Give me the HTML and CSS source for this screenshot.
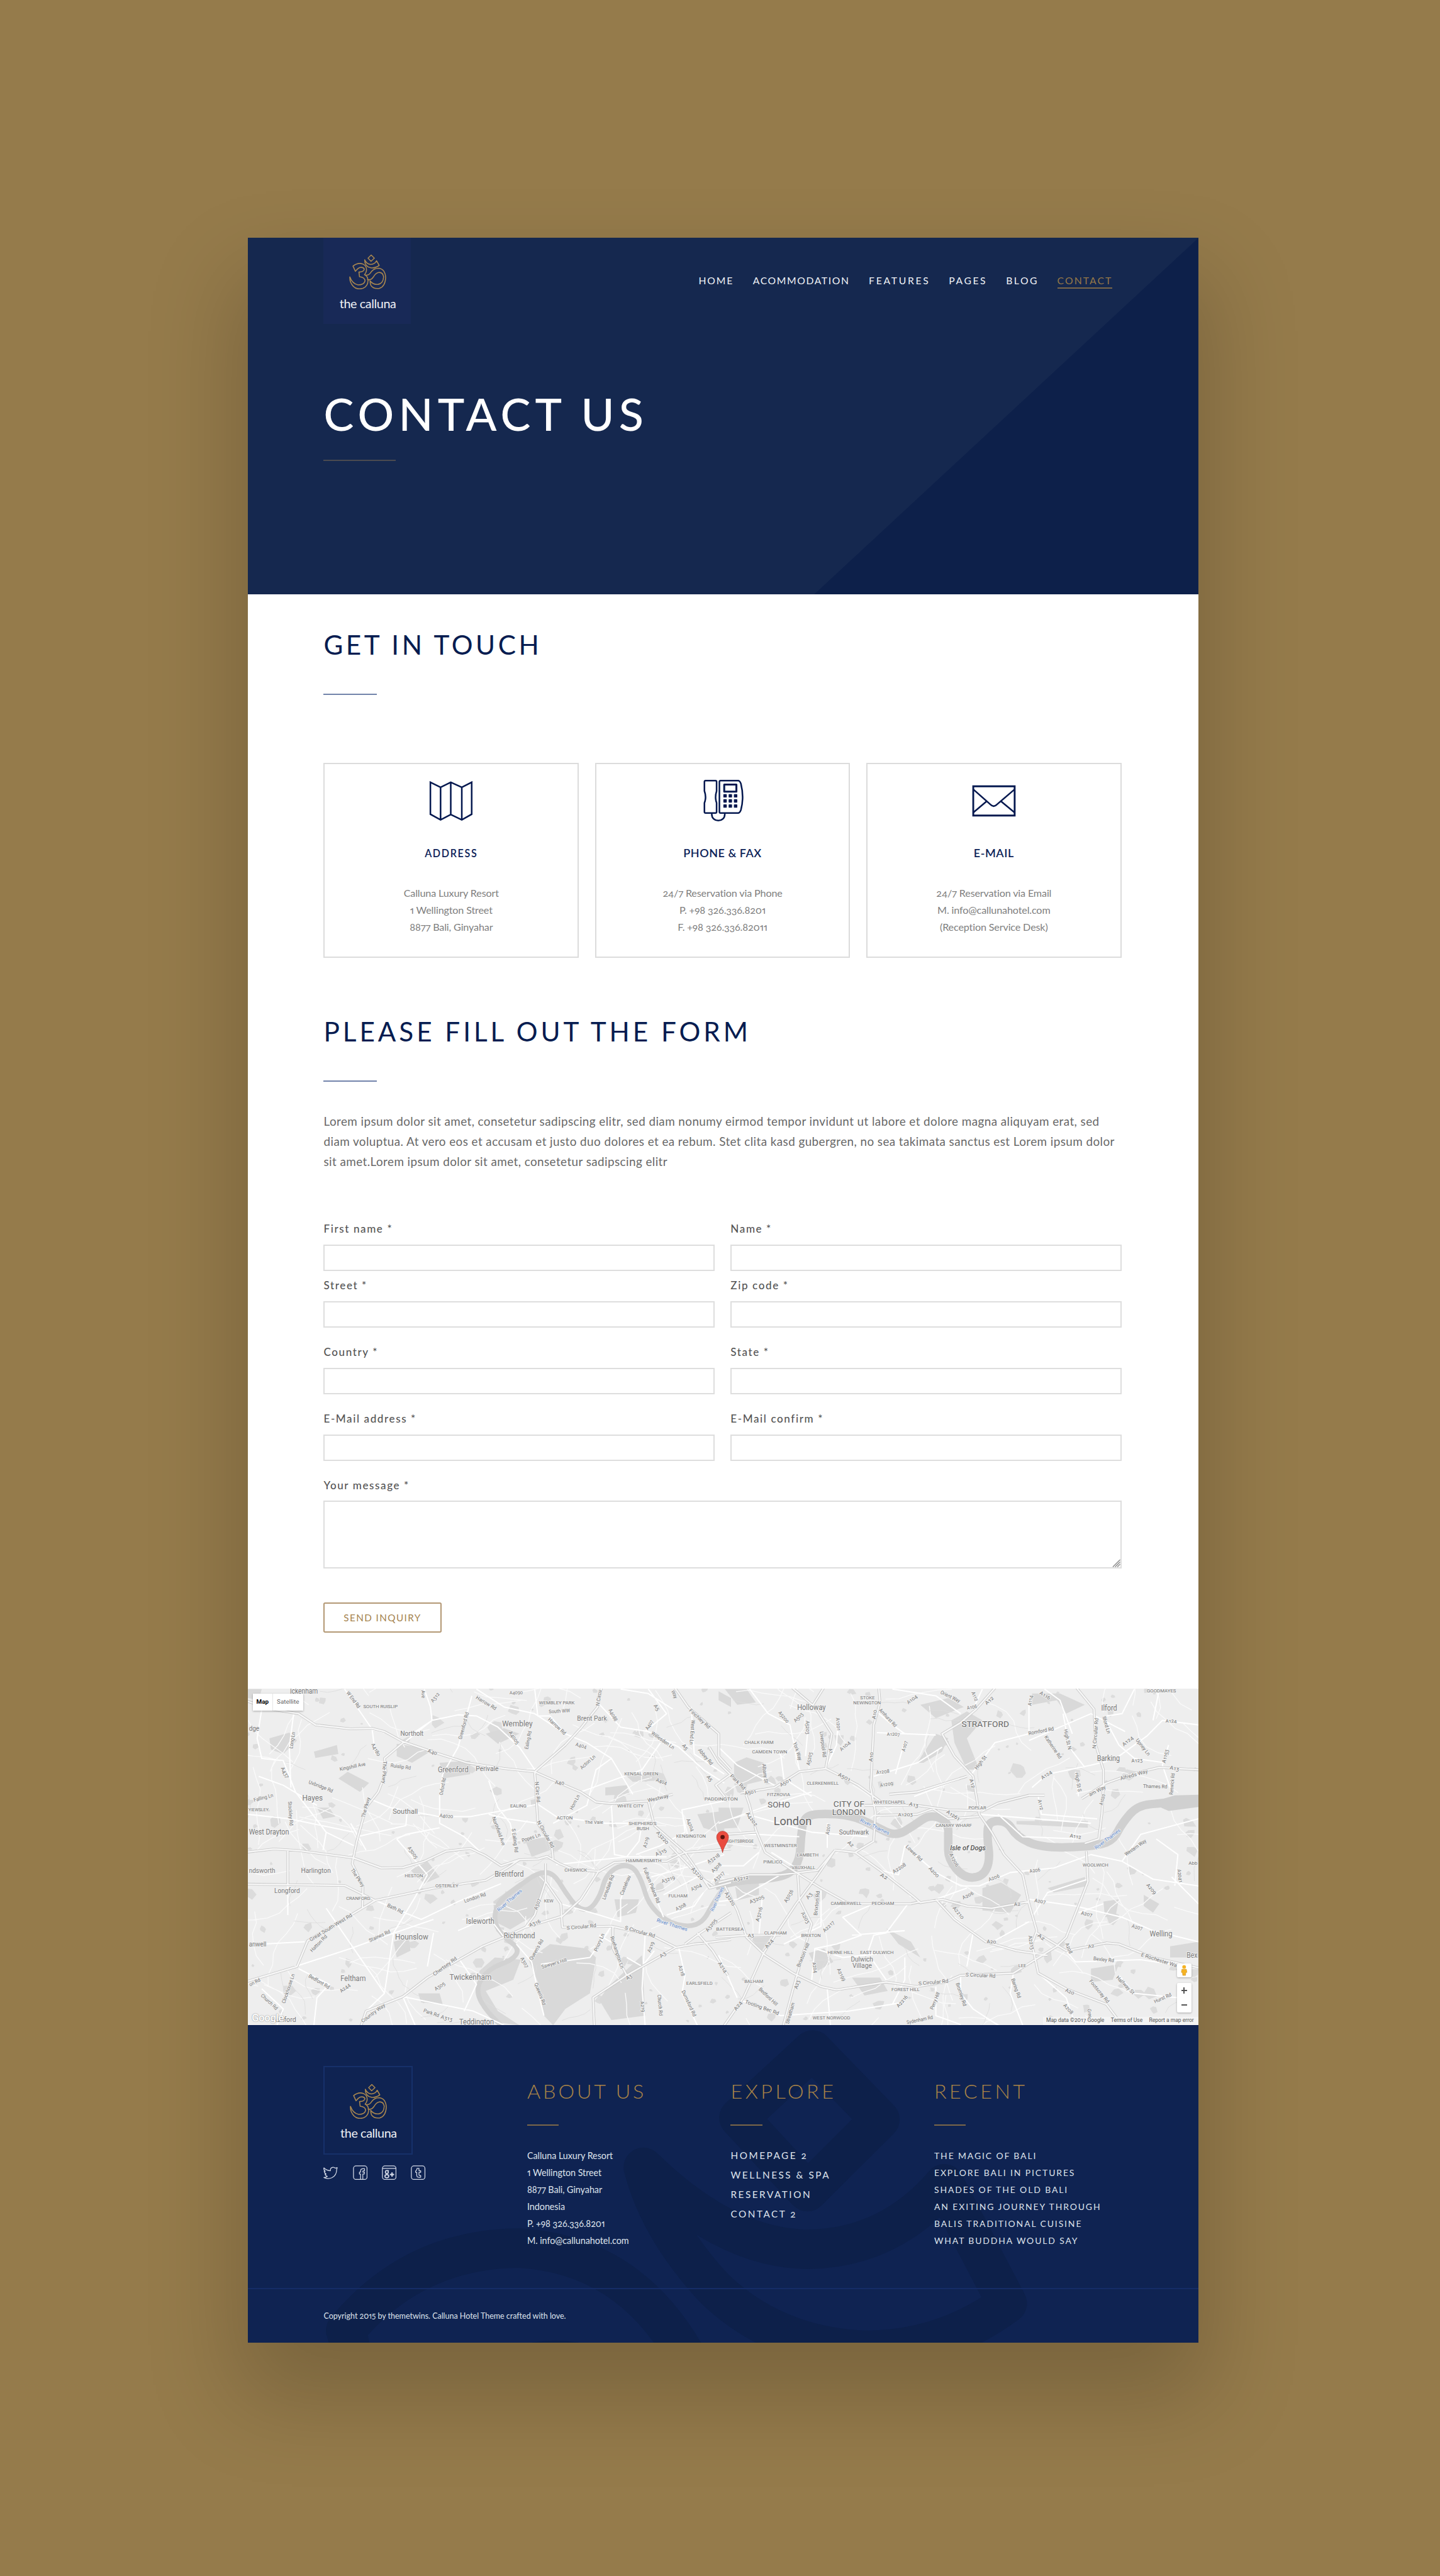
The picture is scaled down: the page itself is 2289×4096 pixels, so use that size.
FILE: index.html
```html
<!DOCTYPE html>
<html lang="en">
<head>
<meta charset="utf-8">
<title>Contact us – the calluna</title>
<link rel="stylesheet" href="styles.css">
</head>
<body>
<svg class="defs" aria-hidden="true">
  <symbol id="om" viewBox="157 96 205 192">
    <g fill="none" stroke="currentColor" stroke-width="5.4" stroke-linejoin="round" stroke-linecap="round">
      <path d="M278 101 L295 118 L277 135 L261 118 Z"/>
      <path d="M243 127 Q252 149 275 152 Q297 151 307 132 L321 157 Q300 173 276 170 Q242 163 243 127 Z"/>
      <path d="M180 161 Q205 140 232 149 Q257 160 252 188 Q250 198 242 207 Q259 214 261 238 Q260 270 233 281 Q202 290 182 270 Q161 248 163 219 Q177 257 207 262 Q240 262 245 240 Q243 221 215 218 L212 193 Q238 193 241 177 Q234 164 215 169 Q202 175 193 189 Z"/>
      <path d="M246 209 Q264 214 278 192 Q292 172 318 172 Q353 176 356 222 Q354 270 322 281 Q288 285 276 264 Q272 252 272 240 Q288 262 315 259 Q343 255 345 218 Q340 193 318 195 Q302 198 290 219 Q277 239 258 233"/>
    </g>
  </symbol>
</svg>
<div class="page">
  <header class="hero">
    <div class="topbar">
      <a class="logo"><svg class="om"><use href="#om"/></svg><span>the calluna</span></a>
      <nav class="nav">
        <a>HOME</a><a>ACOMMODATION</a><a>FEATURES</a><a>PAGES</a><a>BLOG</a><a class="active">CONTACT</a>
      </nav>
    </div>
    <h1>CONTACT US</h1>
    <div class="rule rule-hero"></div>
  </header>

  <main class="content">
    <h2 class="touch">GET IN TOUCH</h2>
    <div class="rule"></div>
    <div class="cards">
      <section class="card">
        <svg viewBox="0 0 80 80" fill="none" stroke="currentColor" stroke-width="2.8" stroke-linejoin="miter">
          <path d="M3.500 6.500 L21.500 15.500 L39.500 6.500 L59 15.500 L76.500 6.500 V63 L59 73 L39.500 63.500 L21.500 73 L3.500 63 Z M21.500 15.500 V73 M39.500 6.500 V63.500 M59 15.500 V73"/>
        </svg>
        <h4 class="wide">ADDRESS</h4>
        <p>Calluna Luxury Resort</p><p class="num">1 Wellington Street</p><p class="num">8877 Bali, Ginyahar</p>
      </section>
      <section class="card">
        <svg viewBox="0 0 80 80" fill="none" stroke="currentColor" stroke-width="2.8" stroke-linejoin="round">
          <path d="M9.500 3.500 H27 Q29 3.500 29 5.500 V22 Q25.500 33 29 43 V59 Q29 61 27 61 H9.500 Q7.500 61 7.500 59 V43 Q11.500 33 7.500 22 V5.500 Q7.500 3.500 9.500 3.500 Z"/>
          <path d="M36 3.500 H67 Q70 3.500 72 9 Q78 33 72 55.500 Q70 61 67 61 H36 Q34 61 34 59 V5.500 Q34 3.500 36 3.500 Z"/>
          <path stroke-width="3.400" d="M42.500 10.500 H64 V23 H42.500 Z"/>
          <path d="M20.500 61 V63 C20.500 78 43.500 78 43.500 63 V61"/>
          <g fill="currentColor" stroke="none">
            <rect x="41" y="27.500" width="6" height="6" rx="1"/><rect x="50.300" y="27.500" width="6" height="6" rx="1"/><rect x="59.600" y="27.500" width="6" height="6" rx="1"/>
            <rect x="41" y="36.500" width="6" height="6" rx="1"/><rect x="50.300" y="36.500" width="6" height="6" rx="1"/><rect x="59.600" y="36.500" width="6" height="6" rx="1"/>
            <rect x="41" y="45.500" width="6" height="6" rx="1"/><rect x="50.300" y="45.500" width="6" height="6" rx="1"/><rect x="59.600" y="45.500" width="6" height="6" rx="1"/>
          </g>
        </svg>
        <h4>PHONE &amp; FAX</h4>
        <p>24/7 Reservation via Phone</p><p class="tel">P. +98 326.336.8201</p><p class="tel">F. +98 326.336.82011</p>
      </section>
      <section class="card">
        <svg viewBox="0 0 80 80" fill="none" stroke="currentColor" stroke-width="2.800">
          <path d="M3.400 13.600 H76.600 V65.400 H3.400 Z" stroke-width="3.200"/>
          <path d="M3.500 19 L34 46 Q39.500 51.500 45 46 L76.500 19 M3.500 60 L26.500 40.500 M76.500 60 L53 40.500"/>
        </svg>
        <h4>E-MAIL</h4>
        <p>24/7 Reservation via Email</p><p>M. info@callunahotel.com</p><p>(Reception Service Desk)</p>
      </section>
    </div>

    <h2 class="fill">PLEASE FILL OUT THE FORM</h2>
    <div class="rule"></div>
    <p class="intro">Lorem ipsum dolor sit amet, consetetur sadipscing elitr, sed diam nonumy eirmod tempor invidunt ut labore et dolore magna aliquyam erat, sed<br>diam voluptua. At vero eos et accusam et justo duo dolores et ea rebum. Stet clita kasd gubergren, no sea takimata sanctus est Lorem ipsum dolor<br>sit amet.Lorem ipsum dolor sit amet, consetetur sadipscing elitr</p>

    <form class="form">
      <div class="row tight">
        <label>First name *<input type="text"></label><label>Name *<input type="text"></label>
      </div>
      <div class="row">
        <label>Street *<input type="text"></label><label>Zip code *<input type="text"></label>
      </div>
      <div class="row">
        <label>Country *<input type="text"></label><label>State *<input type="text"></label>
      </div>
      <div class="row">
        <label>E-Mail address *<input type="text"></label><label>E-Mail confirm *<input type="text"></label>
      </div>
      <label>Your message *
        <span class="area"><svg class="grip" viewBox="0 0 14 14"><path d="M1 14 L14 1 M5 14 L14 5 M9 14 L14 9" stroke="#8b8b8b" stroke-width="1.500"/></svg></span>
      </label>
      <button type="button">SEND INQUIRY</button>
    </form>
  </main>

  <section class="map">
    <svg id="map" viewBox="0 0 1680 595"></svg>
    <div class="maptype"><b>Map</b><span>Satellite</span></div>
    <div class="pegman"><svg viewBox="0 0 14 20"><circle cx="7" cy="4" r="3.300" fill="#f5b324"/><path d="M3 8 H11 L12 13.500 L10 14 L9.500 19 H4.500 L4 14 L2 13.500 Z" fill="#f5b324" stroke="#c98a1a" stroke-width=".6"/></svg></div>
    <div class="zoom"><i class="plus"></i><i class="minus"></i></div>
    <div class="credit"><span>Map data ©2017 Google</span><span>Terms of Use</span><span>Report a map error</span></div>
    <div class="google">Google</div>
  </section>

  <footer class="footer">
    <svg class="watermark" viewBox="438 3580 1680 561.500" preserveAspectRatio="none" fill="none" stroke="#0d204a" stroke-width="70" stroke-linejoin="round" stroke-linecap="round">
      <path d="M1436 3623 L1555 3746 L1427 3874 L1306 3743 Z"/>
      <path d="M1137 3831 Q1285 3976 1429 3976 Q1572 3974 1669 3860 L1780 4072 Q1670 4154 1533 4155 Q1370 4150 1262 4045 Q1165 3940 1137 3831 Z"/>
      <path d="M625 4190 Q620 4145 611 4120 Q730 3975 918 3974 Q1110 3985 1212 4165"/>
      <path d="M880 4200 Q983 4145 1080 4200"/>
    </svg>
    <div class="footmain">
      <div>
        <a class="logo boxed"><svg class="om"><use href="#om"/></svg><span>the calluna</span></a>
        <div class="social">
          <svg viewBox="0 0 26 26"><path d="M1 4.500 Q6 9.500 12.500 9.500 Q12 4 17 3.500 Q19.500 3.300 21 5 L24.500 4 L23.500 7.500 Q23.500 18 15 22 Q7.500 25 1 21.500 Q5 21.500 7 19.500 Q3.500 18.500 3 15.500 L5 15.500 Q1.500 13.500 1.500 10 L3.500 10.500 Q0 8 1 4.500 Z"/></svg>
          <svg viewBox="0 0 26 26"><rect x="1" y="1" width="24" height="24" rx="4.500"/><path d="M13.500 25 V15.500 H11.500 V12 H13.500 V10 Q13.500 6 18 6 H20.500 V9.500 H18.500 Q17.500 9.500 17.500 11 V12 H20.500 L20 15.500 H17.500 V25"/></svg>
          <svg viewBox="0 0 26 26"><rect x="1" y="1" width="24" height="24" rx="4.500"/><path d="M1 5.500 H25"/><circle cx="8.800" cy="12" r="2.600" stroke-width="1.900"/><ellipse cx="8.800" cy="19.300" rx="3.400" ry="2.700" stroke-width="1.900"/><path stroke-width="2.400" d="M18 12.500 V20 M14.300 16.200 H21.700"/><path d="M9 9.300 H12.500"/></svg>
          <svg viewBox="0 0 26 26"><rect x="1" y="1" width="24" height="24" rx="4.500"/><path d="M11 5.500 H14.500 V9.500 H17.500 V12.500 H14.500 V17 Q14.500 18.500 17.500 18 V21 Q10.500 22.500 10.500 17.500 V12.500 H8.500 V10 Q10.800 9 11 5.500 Z"/></svg>
        </div>
      </div>
      <div>
        <h3>ABOUT US</h3><div class="rule"></div>
        <ul class="about"><li>Calluna Luxury Resort</li><li class="num">1 Wellington Street</li><li class="num">8877 Bali, Ginyahar</li><li>Indonesia</li><li class="tel">P. +98 326.336.8201</li><li>M. info@callunahotel.com</li></ul>
      </div>
      <div>
        <h3>EXPLORE</h3><div class="rule"></div>
        <ul class="explore"><li>HOMEPAGE 2</li><li>WELLNESS &amp; SPA</li><li>RESERVATION</li><li>CONTACT 2</li></ul>
      </div>
      <div>
        <h3>RECENT</h3><div class="rule"></div>
        <ul class="recent"><li>THE MAGIC OF BALI</li><li>EXPLORE BALI IN PICTURES</li><li>SHADES OF THE OLD BALI</li><li>AN EXITING JOURNEY THROUGH</li><li>BALIS TRADITIONAL CUISINE</li><li>WHAT BUDDHA WOULD SAY</li></ul>
      </div>
    </div>
    <div class="copyright">Copyright 2015 by themetwins. Calluna Hotel Theme crafted with love.</div>
  </footer>
</div>
<script src="map.js"></script>
</body>
</html>
```
FILE: styles.css
```css
/* 1rem is ten design pixels of the 2545px wide layout */
html { font-size: 8.9941px; }
* { box-sizing: border-box; margin: 0; padding: 0; }
body {
  background: #957b4b;
  font-family: Lato, "Open Sans", sans-serif;
  font-variant-numeric: oldstyle-nums proportional-nums;
  height: 4096px;
  overflow: hidden;
  padding: 42rem 0 0 43.8rem;
}
ul { list-style: none; }
.defs { position: absolute; width: 0; height: 0; }

.page {
  width: 168rem;
  height: 372.15rem;
  background: #fff;
  box-shadow: 0 8.5rem 15rem 2rem rgba(0, 0, 0, .18);
}

/* Hero */
.hero {
  height: 63.1rem;
  padding-left: 13.4rem;
  color: #fff;
  background:
    linear-gradient(to bottom right, #15284f 50%, #0d204a 50.1%) right top / 68rem 63.1rem no-repeat,
    #15284f;
}
.topbar { display: flex; justify-content: space-between; height: 15.3rem; }
.logo {
  width: 15.4rem;
  height: 15.3rem;
  display: flex;
  flex-direction: column;
  align-items: center;
  padding: 2.9rem 0 0 .2rem;
  background: #182957;
  color: #fff;
}
.logo .om { width: 6.8rem; height: 6.3rem; color: #a8864f; }
.logo span { margin-top: 1.35rem; font-size: 2.2rem; line-height: 2.2rem; letter-spacing: -.02em; color: #eef0f5; }
.nav {
  display: grid;
  grid-template-columns: 9.6rem 20.5rem 14.15rem 10.1rem 9.05rem 9.75rem;
  padding: 6.6rem 1.6rem 0 0;
  margin-right: 13.6rem;
  font-size: 1.75rem;
  line-height: 2rem;
  letter-spacing: .12em;
  color: #f0f2f6;
}
.nav a:nth-child(2) { letter-spacing: .103em; }
.nav a:nth-child(3) { letter-spacing: .172em; }
.nav a:nth-child(4), .nav a:nth-child(5) { letter-spacing: .16em; }
.nav a:nth-child(6) { letter-spacing: .134em; }
.nav a { align-self: start; }
.nav .active { color: #957848; border-bottom: 2px solid #7b6749; padding-bottom: .2rem; }
h1 { margin-top: 11.85rem; font-size: 8rem; line-height: 8rem; font-weight: 500; letter-spacing: .1em; }
.rule { width: 9.4rem; height: 2px; background: #7183aa; }
.rule-hero { width: 12.7rem; margin-top: 4.1rem; background: #4b4b50; }

/* Content */
.content { height: 193.4rem; padding: 6.5rem 13.6rem 0 13.4rem; }
h2 { font-size: 4.7rem; line-height: 4.7rem; font-weight: 400; color: #061c50; margin-bottom: 6.3rem; }
.touch { letter-spacing: .107em; }
.fill { letter-spacing: .117em; margin-top: 10.7rem; }
.cards { display: grid; grid-template-columns: repeat(3, 1fr); gap: 2.85rem; margin-top: 12rem; }
.card {
  height: 34.53rem;
  border: 2px solid #dcdcdc;
  padding-top: 2.6rem;
  text-align: center;
  font-size: 1.8rem;
  line-height: 3rem;
  color: #808080;
}
.card svg { display: block; width: 8rem; height: 8rem; margin: 0 auto; color: #04184f; }
.card h4 {
  margin: 4rem 0 4.4rem;
  font-size: 2rem;
  line-height: 2.4rem;
  font-weight: 600;
  letter-spacing: .03em;
  color: #0c2258;
}
.card .wide { font-size: 1.8rem; letter-spacing: .1em; }
.card p { letter-spacing: -.01em; }
.intro {
  margin-top: 5.15rem;
  font-size: 2.1rem;
  line-height: 3.6rem;
  letter-spacing: .0222em;
  color: #686868;
  white-space: nowrap;
}
.form { margin-top: 8.84rem; }
.row { display: grid; grid-template-columns: 1fr 1fr; gap: 2.85rem; margin-bottom: 3.1rem; }
.tight { margin-bottom: 1.35rem; }
label { display: block; font-size: 1.9rem; line-height: 2.4rem; font-weight: 500; letter-spacing: .093em; color: #555; }
input, .area { display: block; width: 100%; height: 4.7rem; margin-top: 1.57rem; border: 2px solid #dedede; background: #fff; }
.area { position: relative; height: 11.9rem; }
.grip { position: absolute; right: 0; bottom: 0; width: 1.4rem; height: 1.4rem; }
button {
  display: block;
  width: 20.8rem;
  height: 5.36rem;
  margin-top: 6.05rem;
  border: 2px solid #b39874;
  border-radius: .3rem;
  background: #fff;
  font: 400 1.7rem/2rem Lato, sans-serif;
  letter-spacing: .092em;
  color: #a5834e;
}

/* Map */
.map { position: relative; height: 59.5rem; overflow: hidden; background: #eee; font-family: Roboto, sans-serif; }
.map > svg { display: block; width: 100%; height: 100%; }
.maptype, .pegman, .zoom, .credit, .google { position: absolute; }
.maptype {
  left: .9rem; top: .95rem; width: 8.9rem; height: 2.95rem;
  display: flex; background: #fff; box-shadow: 0 1px 3px rgba(0, 0, 0, .3);
  font-size: 1.1rem; line-height: 3rem; color: #666;
}
.maptype b { width: 3.5rem; text-align: center; color: #000; border-right: 1px solid #e6e6e6; font-weight: 700; }
.maptype span { flex: 1; text-align: center; }
.pegman, .zoom { right: 1.2rem; width: 2.6rem; background: #fff; box-shadow: 0 1px 3px rgba(0, 0, 0, .3); border-radius: 2px; }
.pegman { top: 48.6rem; height: 2.5rem; }
.pegman svg { display: block; height: 2rem; margin: .25rem auto; }
.zoom { top: 52.1rem; height: 5.2rem; display: flex; flex-direction: column; justify-content: space-around; align-items: center; }
.zoom i { width: 1.1rem; height: 1.1rem; background: linear-gradient(#555, #555) center / 100% .25rem no-repeat; }
.zoom .plus { background: linear-gradient(#555, #555) center / 100% .25rem no-repeat, linear-gradient(#555, #555) center / .25rem 100% no-repeat; }
.credit {
  right: 0; bottom: 0; height: 1.4rem; padding: 0 .8rem 0 .6rem; display: flex; gap: 1.15rem;
  background: rgba(245, 245, 245, .8); font-size: .95rem; line-height: 1.2rem; color: #555; white-space: nowrap;
}
.google {
  left: .7rem; bottom: .2rem; font-size: 1.85rem; line-height: 2rem; font-weight: 500; color: #fff;
  text-shadow: 0 0 2px #999, 0 0 1px #999; letter-spacing: -.02em;
}

/* Footer */
.footer { position: relative; height: 56.15rem; background: #0f2352; border-top: 1px solid #06164a; overflow: hidden; color: #dfe3ec; }
.watermark { position: absolute; inset: 0; width: 100%; height: 100%; }
.footmain {
  position: relative;
  display: grid;
  grid-template-columns: repeat(4, 35.97rem);
  height: 46.6rem;
  padding: 7.1rem 0 0 13.4rem;
  border-bottom: 2px solid #152c66;
}
.boxed { width: 15.7rem; height: 15.7rem; border: 2px solid #16306a; background: none; }
.footmain .social { display: flex; gap: 2.55rem; margin-top: 1.85rem; }
.social svg { width: 2.6rem; height: 2.6rem; fill: none; stroke: #d3d9e6; stroke-width: 1.4; stroke-linejoin: round; }
h3 { margin-top: 2.65rem; font-size: 3.6rem; line-height: 3.6rem; font-weight: 300; letter-spacing: .138em; color: #a98347; }
div:nth-child(2) > h3 { letter-spacing: .12em; }
.footmain .rule { width: 5.6rem; margin-top: 4.1rem; background: #7b6749; }
.about { margin-top: 3.8rem; font-size: 1.6rem; line-height: 3.01rem; letter-spacing: -.004em; }
.explore { margin-top: 3.63rem; font-size: 1.7rem; line-height: 3.43rem; letter-spacing: .166em; }
.recent { margin-top: 3.8rem; font-size: 1.55rem; line-height: 3.01rem; letter-spacing: .135em; }
.copyright { position: relative; padding: 3.8rem 0 0 13.4rem; font-size: 1.4rem; line-height: 2rem; letter-spacing: -.004em; }
```
FILE: map.js
```js
const NS = 'http://www.w3.org/2000/svg';
const svg = document.getElementById('map');
const west = (x, y) => [x / 1.8447 - 8, y / 2.529 - 15];
const east = (x, y) => [832 + x / 1.8233, y / 2.529 - 15];

function el(name, attrs, text) {
  const n = document.createElementNS(NS, name);
  for (const k in attrs) n.setAttribute(k, attrs[k]);
  if (text) n.textContent = text;
  svg.appendChild(n);
  return n;
}
const pts = (s, p) => s.trim().split(/\s+/).map(v => p(...v.split(',').map(Number)));
function poly(a, close) { return 'M' + a.map(p => p[0].toFixed(1) + ' ' + p[1].toFixed(1)).join('L') + (close ? 'Z' : ''); }
function smooth(a) {
  let d = 'M' + a[0].join(' ');
  for (let i = 1; i < a.length - 1; i++) {
    const m = [(a[i][0] + a[i + 1][0]) / 2, (a[i][1] + a[i + 1][1]) / 2];
    d += 'Q' + a[i].join(' ') + ' ' + (i === a.length - 2 ? a[i + 1] : m).join(' ');
  }
  return a.length < 3 ? poly(a) : d;
}
let seed = 71;
const rnd = () => (seed = (seed * 16807) % 2147483647) / 2147483647;

// small green spaces
let d = '';
for (let i = 0; i < 330; i++) {
  const x = rnd() * 1680, y = rnd() * 595, r = 3 + rnd() * rnd() * 15, n = 5 + Math.floor(rnd() * 3), q = [];
  for (let k = 0; k < n; k++) { const t = k / n * 6.283 + rnd() * .6, e = r * (.5 + rnd() * .6); q.push([x + Math.cos(t) * e, y + Math.sin(t) * e * .9]); }
  d += poly(q, true);
}
el('path', { d, fill: '#dcdcdc' });

const parksW = ['815,990 900,905 975,860 985,900 950,1050 870,1115 820,1080', '930,1250 1000,1180 1120,1200 1150,1240 1130,1400 1050,1470 1010,1543 980,1500 960,1350',
  '1190,1370 1300,1230 1310,1500 1200,1520 1160,1430', '770,1300 820,1240 905,1250 880,1340 790,1390 830,1480 900,1543 830,1530 760,1400', '85,260 150,235 175,270 130,330 90,310',
  '230,320 305,290 310,330 235,348', '310,440 340,410 410,460 380,500', '500,285 620,310 550,370 500,340', '790,240 850,215 900,240 830,285', '490,1170 540,1150 545,1210 500,1240',
  '1480,600 1568,585 1568,690 1500,660', '920,720 990,700 1000,760 940,790', '1180,480 1250,470 1260,510 1180,515', '545,850 600,810 640,880 590,910', '640,370 740,360 740,420 650,440',
  '1210,980 1290,980 1280,1040 1220,1060', '570,1400 640,1400 650,1450 580,1440', '15,40 60,40 50,90 15,80', '240,570 280,570 300,610 260,620', '1250,430 1340,420 1340,450 1270,455'];
const parksE = ['0,50 40,80 40,120 0,90', '50,370 90,345 145,370 140,450 80,470 50,440', '0,570 80,570 60,660 0,665', '50,890 130,880 130,960 60,985', '100,1150 170,1145 140,1210',
  '640,370 700,240 740,260 720,320 660,370', '750,180 800,140 850,180 800,260 840,400 800,400 760,280', '850,930 910,905 975,960 940,1040 850,1030', '1010,60 1100,60 1180,110 1120,150 1090,90 1010,110',
  '290,1220 340,1200 370,1260 320,1300', '430,1330 520,1330 545,1390 470,1410', '1240,990 1290,980 1280,1050 1245,1060', '1370,960 1420,1000 1400,1040 1370,1010', '1200,1290 1290,1270 1270,1340 1200,1350',
  '540,1110 620,1170 650,1240 580,1180', '1455,1190 1546,1170 1546,1240 1455,1240', '650,110 740,80 790,120 700,170', '960,630 1190,630 1190,660 960,645', '1060,930 1180,880 1190,920 1080,950', '20,40 90,40 120,100 60,110'];
el('path', { d: parksW.map(s => poly(pts(s, west), true)).join('') + parksE.map(s => poly(pts(s, east), true)).join(''), fill: '#d9d9d9' });

// minor streets
d = '';
for (let i = 0; i < 210; i++) {
  let x = rnd() * 1680, y = rnd() * 595, t = rnd() * 6.283; const q = [[x, y]];
  for (let k = 0; k < 3 + rnd() * 4; k++) { t += (rnd() - .5) * .9; x += Math.cos(t) * 24; y += Math.sin(t) * 20; q.push([x, y]); }
  d += poly(q);
}
el('path', { d, fill: 'none', stroke: '#fafafa', 'stroke-width': 1.5 });
d = '';
for (let i = 0; i < 90; i++) {
  let x = rnd() * 1680, y = rnd() * 595, t = rnd() * 6.283; const q = [[x, y]];
  for (let k = 0; k < 4; k++) { t += (rnd() - .5); x += Math.cos(t) * 14; y += Math.sin(t) * 12; q.push([x, y]); }
  d += poly(q);
}
el('path', { d, fill: 'none', stroke: '#dedede', 'stroke-width': 1 });

// Thames
el('path', { d: smooth(pts('840,1543 790,1480 755,1380 800,1290 880,1250 900,1200 850,1150 815,1080 830,990 900,920 960,860 1010,860 1050,950 1090,1020 1130,1030 1165,960 1180,880 1220,830 1270,830 1300,900 1320,1000 1380,1080 1450,1105 1500,1080 1530,1000 1568,925', west)), fill: 'none', stroke: '#d2d2d2', 'stroke-width': 8.5 });
el('path', { d: smooth(pts('-10,920 60,895 150,890 230,870 262,800 265,700 275,610 330,595 430,605 500,650 570,700 630,650 680,600 740,630 740,720 740,800 790,885 850,880 875,810 865,700 870,630 930,630 960,700 1040,750 1200,745 1270,720 1300,640 1350,560 1430,550 1560,530', east)), fill: 'none', stroke: '#d0d0d0', 'stroke-width': 15 });
el('path', { d: poly(pts('1390,548 1470,515 1560,512 1560,565 1450,585', east), true), fill: '#d0d0d0' });

// secondary roads
const midW = ['330,40 420,220', '60,130 45,260 60,350 130,360 170,500', '165,140 150,300 155,480', '590,40 610,120 615,180 460,350', '540,250 615,180 700,155 760,160 830,210 900,300 950,400', '745,70 700,300 650,420 640,520 640,640 720,700 790,790',
  '760,40 850,120 950,150 1050,240 1120,280 1200,350 1270,510', '950,40 960,160 1000,160 1050,240', '1155,100 1230,210 1320,230 1420,300 1500,400 1568,460', '1320,40 1380,150 1310,230', '1230,40 1320,60 1400,130', '460,235 420,220 430,330',
  '170,500 270,680 360,740', '410,530 480,570 640,610 740,610 860,580 960,555 1020,610 1180,640 1320,640', '270,680 260,760', '370,700 530,650 535,570', '500,710 600,870', '640,660 530,690 500,710', '800,450 830,570 870,640 890,770', '960,640 860,620 800,600',
  '1010,640 1120,560 1150,400 1200,350', '1200,560 1210,780 1250,790 1290,720 1300,640', '1020,825 1250,790 1380,790', '600,870 560,970 490,1130 460,1400 400,1480', '145,915 145,1050', '430,985 580,1070 700,990 840,910', '700,1120 800,1060 850,1150', '430,1160 620,1070',
  '170,1280 350,1200 430,1160', '270,1020 460,1400', '400,760 350,640', '520,1415 750,1480 850,1543', '520,1415 560,1543', '700,1240 760,1360 720,1480', '60,1380 130,1470 110,1543', '180,1290 280,1360 240,1420 230,1543', '890,1180 940,1260 960,1390 980,1500',
  '970,1270 1130,1240 1200,1100', '1035,1000 1160,1050 1230,1080 1230,980 1260,870', '1305,850 1340,960 1370,1060', '1330,880 1460,830 1568,780', '1370,960 1480,880', '1310,1140 1300,1380 1310,1543', '1380,1050 1470,1010 1500,950', '1420,1200 1440,1320 1430,1400 1480,1543',
  '1280,780 1360,740 1440,680 1430,580 1568,540', '1430,590 1450,700', '1250,1240 1300,1280 1340,1210', '1160,1140 1210,1180', '620,1130 600,1280', '50,430 130,470 240,560', '15,600 150,620 360,680', '200,1170 60,1180', '1460,120 1470,330 1568,420', '1360,280 1300,400 1180,460 1100,500'];
const midE = ['0,300 60,380 180,470', '100,40 160,150 230,200 260,400', '290,180 280,340', '385,170 380,290 345,395', '510,235 700,245', '600,270 570,420', '500,130 560,200 600,240', '560,40 700,70 780,150', '850,40 820,130', '500,430 640,370 720,300', '630,520 800,430',
  '1000,110 1000,240 890,280 810,430', '1000,270 1100,210 1200,150', '1110,150 1130,300 1180,390', '1010,480 1060,420 1200,380 1260,360', '1150,410 1160,520', '1050,40 1100,90 1140,240', '1340,40 1300,150 1250,160', '1240,160 1290,290 1340,350 1440,370', '1290,340 1380,250 1430,180 1546,200',
  '1400,180 1420,40', '1450,290 1430,380 1460,500', '1030,520 1040,600 1220,620', '900,600 980,700 1160,710', '840,600 1200,640', '0,690 130,690 260,700', '0,640 160,560 300,500', '90,600 300,680 480,700', '350,640 350,750', '200,330 210,440 300,520', '130,770 80,830 0,830',
  '170,770 250,840', '600,740 700,860 780,920 840,920 940,860 1080,840', '600,740 580,870 520,850', '1080,840 1200,780 1300,810 1400,890 1546,920', '1300,810 1360,690 1546,620', '1410,710 1480,780 1470,920', '1000,980 1150,1010 1300,1060 1400,1120 1546,1170', '700,980 800,930',
  '140,980 130,1140', '0,990 60,980 200,870', '330,940 330,1100 210,1180', '500,1000 400,1060 460,1140 380,1180 310,1200 300,1340', '610,1000 540,1130 500,1140 480,1220 540,1340', '760,1060 820,1130 800,1280', '780,1320 780,1400 820,1470 900,1543', '600,1240 600,1340 560,1450',
  '700,1370 700,1500 780,1540', '950,1310 940,1400 980,1543', '1030,1310 1120,1420 1150,1543', '1120,1210 1150,1260 1360,1250 1460,1270', '1200,1340 1260,1440', '1290,1320 1340,1400 1480,1420', '70,1430 200,1500 420,1480 600,1440', '0,1230 60,1420', '310,1200 400,1240 540,1220',
  '1190,890 1060,950 1010,1060', '1240,1000 1160,1040', '1460,880 1546,1000', '350,1380 360,1543', '600,930 620,970', '430,1140 600,1120', '870,1180 1000,1080', '1200,150 1310,230'];
const majW = ['0,88 90,130 180,150 235,200 350,218 418,215 460,230 520,275 620,322 730,370 850,395 950,410 1040,465 1100,500 1150,545 1200,552 1320,540 1400,510', '5,770 100,755 180,762 360,795 450,840 520,838 590,810 660,765 740,752 790,785 840,830 900,803 960,800 990,788 1030,820 1080,848 1160,855 1210,815 1300,808 1380,810 1440,770 1590,755',
  '525,275 460,350 465,410 440,500 400,570 370,720 355,820 390,920 388,1020', '5,912 330,918 430,985 620,930 790,895 860,840 900,803', '430,985 210,1165 175,1280 5,1350', '145,760 145,915', '380,1560 400,1480 520,1415 600,1330 780,1190 850,1150 920,1105 1040,1055 1100,980 1160,850',
  '1170,20 1155,120 1100,215 1050,290 950,410 960,640 1005,740 1010,800', '985,820 985,900 950,1050 920,1105', '985,900 1035,1000 1040,1105 1200,1100 1330,1140 1410,1195 1470,1180 1590,1160', '1145,1560 1140,1420 1250,1320 1410,1195', '1205,1100 1205,1200 1250,1320',
  '1480,1130 1530,1210 1580,1320', '1320,540 1340,650 1440,770 1520,930 1590,905', '1390,740 1480,870 1530,920', '1400,20 1450,120 1550,240 1550,340 1590,400', '1590,420 1540,470 1580,540', '1440,1180 1490,1130 1590,1040'];
const majE = ['900,20 830,130 780,190 720,240 760,340 820,430 840,600 880,680 920,780 980,870 1000,1000 1025,1120 1010,1180 1030,1310 1120,1380 1250,1450 1310,1560', '375,760 440,770 520,850 630,970 650,995 720,980 800,1010 880,1020 1000,990', '440,770 500,720 505,590 490,480 500,200 520,100 515,20',
  '470,560 640,560 740,580 850,585 900,550 1000,515 1050,515', '500,605 640,600 690,575 740,620 840,610', '1145,20 1210,130 1215,290 1240,400 1240,470 1235,600 1225,710 1180,730', '1185,765 1190,900 1120,1150 1090,1190 950,1310 780,1320 730,1350 640,1370 540,1350 380,1385 330,1370 240,1310 150,1230 90,1150 60,1030 20,920',
  '1170,530 1250,460 1330,420 1420,390 1560,402', '1025,1130 1120,1210 1250,1175 1290,1180 1400,1240 1560,1290', '700,980 760,1070 860,1170 960,1210 1060,1230', '70,505 180,480 260,410 345,395 410,440 450,470 520,540', '225,20 310,120 365,240 345,395', '0,370 80,480 100,560 120,670 150,770 250,860',
  '0,905 100,870 200,870 320,850 375,760', '10,1560 80,1420 145,1220 250,1000 320,870 370,770', '205,1560 250,1330 300,1090 260,980 255,870', '-10,1150 100,1140 200,1140', '250,860 330,930 420,1000 620,1000 650,990', '20,690 120,680', '0,370 -30,300', '550,510 640,500 800,430', '345,20 300,120'];
const join = (w, e) => w.map(s => poly(pts(s, west))).join('') + e.map(s => poly(pts(s, east))).join('');
el('path', { d: join(midW, midE), fill: 'none', stroke: '#fff', 'stroke-width': 2.3, 'stroke-linejoin': 'round' });
const major = join(majW, majE);
el('path', { d: major, fill: 'none', stroke: '#c6c6c6', 'stroke-width': 4.6, 'stroke-linejoin': 'round' });
el('path', { d: major, fill: 'none', stroke: '#f7f7f7', 'stroke-width': 2.8, 'stroke-linejoin': 'round' });

// labels: [text, x1, y1, x2, y2] run from the first point to the second
const styles = {
  road: { size: 9, fill: '#757575' }, area: { size: 8.8, fill: '#757575' }, town: { size: 13.5, fill: '#7b7b7b' },
  small: { size: 12, fill: '#7b7b7b' }, district: { size: 14, fill: '#666' }, city: { size: 19.5, fill: '#666' }, water: { size: 9, fill: '#5b86c8' }, isle: { size: 12, fill: '#555', italic: true }
};
const labels = {
  town: [[west, 'Ickenham', 152, 47, 243, 47], [west, 'Wembley', 844, 195, 943, 195], [west, 'Hayes', 192, 525, 259, 525], [west, 'West Drayton', 18, 677, 149, 677], [west, 'Brentford', 819, 865, 914, 865], [west, 'Isleworth', 726, 1077, 818, 1077],
    [west, 'Hounslow', 495, 1147, 603, 1147], [west, 'Richmond', 849, 1142, 951, 1142], [west, 'Feltham', 317, 1332, 399, 1332], [west, 'Twickenham', 672, 1328, 809, 1328], [west, 'Teddington', 704, 1526, 817, 1526], [west, 'Greenford', 634, 400, 734, 400],
    [east, 'Holloway', 253, 121, 345, 121], [east, 'Ilford', 1233, 125, 1284, 125], [east, 'Barking', 1219, 349, 1293, 349], [east, 'Welling', 1389, 1133, 1462, 1133], [east, 'Bex', 1508, 1230, 1543, 1230]],
  small: [[west, 'Northolt', 512, 237, 587, 237], [west, 'Brent Park', 1088, 170, 1185, 170], [west, 'Perivale', 758, 396, 832, 396], [west, 'Southall', 487, 586, 569, 586], [west, 'Harlington', 188, 851, 285, 851], [west, 'ndsworth', 18, 851, 104, 851], [west, 'Longford', 101, 940, 184, 940],
    [west, 'anwell', 18, 1181, 75, 1181], [west, 'dge', 18, 216, 52, 216], [west, 'Ashford', 95, 1518, 172, 1518], [east, 'Southwark', 388, 679, 484, 679], [east, 'Dulwich', 426, 1246, 498, 1246], [east, 'Village', 431, 1276, 494, 1276]],
  district: [[east, 'STRATFORD', 783, 196, 936, 196], [east, 'SOHO', 158, 558, 230, 558], [east, 'CITY OF', 370, 555, 470, 555], [east, 'LONDON', 366, 591, 474, 591]],
  city: [[east, 'London', 177, 630, 300, 630]],
  isle: [[east, 'Isle of Dogs', 746, 749, 861, 749]],
  water: [[west, 'River Thames', 830, 1030, 906, 938], [west, 'River Thames', 1348, 1072, 1448, 1115], [west, 'River Thames', 1527, 1032, 1562, 925], [east, 'River Thames', 457, 625, 550, 685], [east, 'River Thames', 1213, 752, 1293, 668]],
  area: [[west, 'SOUTH RUISLIP', 391, 117, 503, 117], [west, 'WEMBLEY PARK', 964, 101, 1080, 101], [west, 'KENSAL GREEN', 1242, 419, 1353, 419], [west, 'WHITE CITY', 1219, 560, 1305, 560], [west, 'EALING', 870, 562, 923, 562], [west, 'ACTON', 1021, 616, 1074, 616],
    [west, "SHEPHERD'S", 1256, 640, 1347, 640], [west, 'BUSH', 1282, 661, 1323, 661], [west, 'KENSINGTON', 1411, 697, 1508, 697], [west, 'PADDINGTON', 1503, 531, 1612, 531], [west, 'HAMMERSMITH', 1247, 807, 1363, 807], [west, 'CHISWICK', 1047, 848, 1121, 848], [west, 'HESTON', 526, 874, 586, 874],
    [west, 'OSTERLEY', 626, 917, 701, 917], [west, 'CRANFORD', 335, 974, 414, 974], [west, 'KEW', 980, 986, 1011, 986], [west, 'FULHAM', 1386, 962, 1448, 962], [west, 'EARLSFIELD', 1444, 1355, 1530, 1355], [west, 'YIEWSLEY', 17, 578, 82, 578], [west, 'The Vale', 1113, 635, 1173, 635], [west, 'South WW', 996, 140, 1065, 135],
    [east, 'STOKE', 456, 79, 503, 79], [east, 'NEWINGTON', 434, 101, 523, 101], [east, 'CHALK FARM', 83, 276, 177, 276], [east, 'CAMDEN TOWN', 108, 319, 221, 319], [east, 'CLERKENWELL', 284, 459, 387, 459], [east, 'WHITECHAPEL', 499, 545, 603, 545], [east, 'POPLAR', 805, 571, 862, 571],
    [east, 'CANARY WHARF', 699, 649, 816, 649], [east, 'KNIGHTSBRIDGE', 12, 719, 113, 719], [east, 'WESTMINSTER', 147, 738, 252, 738], [east, 'LAMBETH', 252, 781, 322, 781], [east, 'PIMLICO', 144, 812, 205, 812], [east, 'VAUXHALL', 235, 836, 312, 836], [east, 'CAMBERWELL', 361, 998, 461, 998],
    [east, 'PECKHAM', 493, 998, 566, 998], [east, 'BATTERSEA', -8, 1112, 81, 1112], [east, 'CLAPHAM', 147, 1129, 220, 1129], [east, 'BRIXTON', 266, 1140, 329, 1140], [east, 'HERNE HILL', 351, 1217, 434, 1217], [east, 'EAST DULWICH', 456, 1217, 564, 1217], [east, 'BALHAM', 83, 1346, 144, 1346],
    [east, 'FOREST HILL', 557, 1381, 648, 1381], [east, 'WEST NORWOOD', 303, 1508, 424, 1508], [east, 'LEE', 966, 1275, 991, 1275], [east, 'WOOLWICH', 1173, 826, 1256, 826], [east, 'GOODMAYES', 1380, 47, 1474, 47], [east, 'Abb', 1514, 818, 1543, 818], [east, 'FITZROVIA', 156, 510, 230, 510]],
  road: [[west, 'W End Rd', 340, 52, 378, 122], [west, 'A312', 614, 96, 636, 58], [west, 'Ave', 586, 46, 588, 80], [west, 'A4090', 868, 56, 911, 56], [west, 'Harrow Rd', 760, 75, 824, 128], [west, 'Harrow Rd', 996, 172, 1050, 240], [west, 'N Circu', 1155, 115, 1162, 44], [west, 'Way', 1400, 46, 1412, 80], [west, 'A4088', 1196, 130, 1216, 182],
    [west, 'A5', 1342, 110, 1354, 134], [west, 'Finchley Rd', 1456, 132, 1520, 212], [west, 'West End Ln', 1467, 178, 1461, 288], [west, 'A407', 1314, 220, 1332, 180], [west, 'Willesden Ln', 1332, 234, 1404, 304], [west, 'A5', 1434, 288, 1447, 310], [west, 'Abbey Rd', 1486, 308, 1528, 376], [west, 'A404', 1084, 286, 1119, 298],
    [west, 'Acton Ln', 1100, 394, 1145, 338], [west, 'Greenford Rd', 706, 264, 730, 144], [west, 'A4005', 870, 230, 896, 284], [west, 'Ealing Rd', 922, 308, 934, 228], [west, 'Long Ln', 155, 305, 163, 232], [west, 'A4180', 422, 284, 443, 338], [west, 'A40', 602, 314, 632, 328], [west, 'The Pkwy', 462, 362, 458, 462], [west, 'Ruislip Rd', 480, 380, 546, 392],
    [west, 'Kingshill Ave', 314, 398, 398, 374], [west, 'A437', 127, 390, 145, 436], [west, 'Uxbridge Rd', 214, 454, 292, 496], [west, 'A404', 1346, 444, 1381, 460], [west, 'A40', 1016, 456, 1046, 460], [west, 'N Circ Rd', 957, 454, 963, 546], [west, 'A5', 1514, 428, 1527, 450], [west, 'Oxford Rd', 644, 514, 655, 436], [west, 'Falling Ln', 34, 536, 97, 514],
    [west, 'Stockley Rd', 152, 542, 157, 650], [west, 'The Pkwy', 390, 614, 408, 524], [west, 'A4020', 640, 604, 684, 610], [west, 'Northfield Ave', 816, 612, 850, 738], [west, 'S Ealing Rd', 881, 664, 891, 770], [west, 'Popes Ln', 908, 718, 968, 690], [west, 'N Circular Rd', 962, 630, 1010, 748], [west, 'Horn Ln', 1068, 578, 1092, 514], [west, 'Westway', 1318, 538, 1386, 516],
    [west, 'A4204', 1450, 620, 1466, 674], [west, 'A3220', 1350, 678, 1384, 730], [west, 'A219', 1308, 748, 1316, 702], [west, 'A315', 1344, 780, 1378, 758], [west, 'A3005', 540, 746, 566, 796], [west, 'The Pkwy', 354, 844, 392, 922], [west, 'A3218', 1514, 814, 1552, 780], [west, 'A308', 1528, 856, 1556, 820], [west, 'A3217', 1536, 898, 1566, 858],
    [west, 'A3220', 1464, 840, 1498, 890], [west, 'A3219', 1364, 900, 1406, 880], [west, 'A304', 1460, 936, 1492, 914], [west, 'Fulham Palace Rd', 1308, 838, 1354, 996], [west, 'Castelnau', 1232, 960, 1258, 874], [west, 'Lonsdale Rd', 1174, 980, 1204, 872], [west, 'London Rd', 720, 988, 790, 956], [west, 'A307', 952, 1026, 964, 978], [west, 'A308', 1410, 1024, 1442, 1002],
    [west, 'Bath Rd', 470, 1004, 520, 1038], [west, 'Great South-West Rd', 217, 1162, 353, 1048], [west, 'Hatton Rd', 220, 1212, 270, 1142], [west, 'Staines Rd', 410, 1164, 478, 1122], [west, 'A316', 932, 1096, 968, 1076], [west, 'S Circular Rd', 1054, 1108, 1150, 1096], [west, 'S Circular Rd', 1244, 1106, 1342, 1144], [west, 'A3205', 1510, 1122, 1540, 1070],
    [west, 'Chertsey Rd', 620, 1316, 694, 1242], [west, "Queen's Rd", 936, 1250, 974, 1160], [west, "Sawyer's Hill", 972, 1282, 1054, 1250], [west, 'Priory Ln', 1148, 1212, 1172, 1134], [west, 'Roehampton Ln', 1202, 1146, 1236, 1288], [west, 'A307', 908, 1240, 926, 1284], [west, 'A219', 1322, 1216, 1334, 1170], [west, 'A3', 1358, 1236, 1376, 1218], [west, 'A3', 1248, 1334, 1266, 1320],
    [west, 'A218', 1424, 1276, 1434, 1322], [west, 'Durnsford Rd', 1434, 1388, 1472, 1502], [west, 'Church Rd', 1356, 1406, 1362, 1500], [west, 'A219', 1300, 1436, 1305, 1484], [west, "Queen's Rd", 954, 1354, 982, 1452], [west, 'A305', 624, 1382, 656, 1354], [west, 'Country Way', 386, 1526, 460, 1450], [west, 'Park Rd', 588, 1476, 638, 1500], [west, 'A313', 644, 1504, 682, 1518],
    [west, 'A244', 316, 1392, 346, 1360], [west, 'Bedfont Rd', 214, 1320, 280, 1374], [west, 'Clockhouse Ln', 130, 1444, 162, 1314], [west, 'Church Rd', 60, 1406, 110, 1470], [west, 'on Rd', 20, 1362, 54, 1338],
    [east, 'A5200', 196, 142, 224, 188], [east, 'A503', 244, 184, 270, 148], [east, 'A5203', 287, 182, 288, 242], [east, 'A1201', 384, 168, 388, 226], [east, 'Liverpool Rd', 332, 230, 342, 344], [east, 'A1', 360, 306, 364, 326], [east, 'A104', 392, 312, 422, 276], [east, 'York Way', 246, 278, 264, 358], [east, 'A5203', 288, 380, 296, 322], [east, 'A10', 500, 174, 504, 132], [east, 'A10', 490, 364, 493, 322],
    [east, 'Amhurst Rd', 520, 130, 572, 206], [east, 'A104', 608, 102, 638, 70], [east, 'A1207', 542, 240, 584, 240], [east, 'A107', 595, 318, 603, 272], [east, 'A1208', 508, 412, 550, 406], [east, 'A1209', 520, 470, 562, 460], [east, 'Orient Way', 716, 52, 778, 94], [east, 'A112', 820, 52, 832, 92], [east, 'A106', 800, 124, 832, 116], [east, 'A12', 860, 106, 884, 76],
    [east, 'A12', 814, 442, 822, 482], [east, 'High St', 828, 396, 860, 340], [east, 'A114', 1002, 114, 1006, 68], [east, 'A116', 1036, 54, 1068, 82], [east, 'Romford Rd', 998, 238, 1080, 216], [east, 'Katherine Rd', 1054, 250, 1102, 348], [east, 'High St N', 1118, 220, 1132, 310], [east, 'N Circular Rd', 1210, 306, 1218, 170], [east, 'Ilford Ln', 1242, 162, 1258, 238], [east, 'A124', 1440, 182, 1476, 182],
    [east, 'A124', 1302, 290, 1334, 254], [east, 'Upney Ln', 1348, 264, 1388, 334], [east, 'A1153', 1434, 370, 1444, 310], [east, 'A123', 1330, 360, 1366, 358], [east, 'A124', 1040, 438, 1072, 408], [east, 'High St S', 1154, 414, 1164, 498], [east, 'Alfreds Way', 1294, 440, 1382, 406], [east, 'A13', 1454, 390, 1484, 398], [east, 'Thames Rd', 1368, 474, 1446, 476], [east, 'Renwick Rd', 1458, 512, 1464, 416], [east, 'am Way', 1194, 512, 1246, 476],
    [east, 'Park Rd', 40, 424, 84, 486], [east, 'Albany St', 146, 374, 154, 460], [east, 'A501', 198, 470, 232, 444], [east, 'A501', 386, 420, 424, 446], [east, 'A501', 84, 506, 120, 496], [east, 'A13', 614, 552, 644, 562], [east, 'A1203', 578, 600, 626, 600], [east, 'A1261', 736, 586, 776, 622], [east, 'A112', 1034, 534, 1042, 580], [east, 'A1020', 1232, 558, 1240, 510], [east, 'A112', 1132, 694, 1168, 702],
    [east, 'A4202', 92, 592, 122, 650], [east, 'A201', 350, 690, 354, 644], [east, 'A2', 418, 722, 434, 742], [east, 'Lower Rd', 606, 740, 654, 806], [east, 'A1206', 748, 776, 770, 832], [east, 'A2208', 562, 858, 602, 822], [east, 'A200', 680, 838, 708, 878], [east, 'A206', 870, 892, 904, 874], [east, 'A206', 1002, 854, 1036, 846], [east, 'A206', 786, 974, 820, 950], [east, 'Western Way', 1310, 780, 1376, 716], [east, 'A2041', 1484, 846, 1490, 904],
    [east, 'A209', 1382, 912, 1408, 954], [east, 'A2', 522, 868, 544, 886], [east, 'A3212', 48, 892, 96, 880], [east, 'A3205', 100, 992, 146, 966], [east, 'A3220', 24, 948, 50, 1006], [east, 'A3216', 124, 1078, 136, 1014], [east, 'A3036', 214, 992, 236, 938], [east, 'A3', 284, 976, 298, 952], [east, 'Brixton Rd', 312, 1052, 320, 942], [east, 'A203', 270, 1038, 290, 1086], [east, 'A2217', 338, 1122, 370, 1080], [east, 'A2210', 758, 1014, 788, 1066],
    [east, 'A2', 952, 1002, 972, 1000], [east, 'A207', 1018, 984, 1054, 992], [east, 'A207', 1168, 1040, 1204, 1050], [east, 'A207', 1332, 1098, 1366, 1110], [east, 'A20', 864, 1168, 894, 1170], [east, 'A2213', 1004, 1142, 1012, 1204], [east, 'A2', 1030, 1138, 1050, 1158], [east, 'A208', 1122, 1176, 1136, 1222], [east, 'A2', 1190, 1192, 1210, 1186], [east, 'E Rochester Wa', 1362, 1226, 1476, 1276], [east, 'Bexley Rd', 1208, 1244, 1274, 1254],
    [east, 'A3', 94, 1140, 114, 1140], [east, 'A24', 152, 1196, 172, 1160], [east, 'Brixton Hill', 256, 1282, 288, 1176], [east, 'A204', 308, 1262, 314, 1308], [east, 'A2199', 386, 1290, 406, 1344], [east, 'A214', 2, 1262, 24, 1306], [east, 'A23', 248, 1380, 256, 1342], [east, 'Bedford Hill', 132, 1378, 188, 1452], [east, 'Tooting Bec Rd', 86, 1436, 194, 1490], [east, 'A24', 52, 1474, 72, 1438], [east, 'Streatham', 220, 1536, 240, 1442],
    [east, 'S Circular Rd', 644, 1356, 740, 1344], [east, 'S Circular Rd', 796, 1316, 892, 1322], [east, 'Bromley Rd', 770, 1354, 794, 1456], [east, 'Perry Hill', 686, 1472, 708, 1396], [east, 'A2216', 576, 1460, 606, 1412], [east, 'Sydenham Rd', 606, 1530, 690, 1506], [east, 'Baring Rd', 948, 1334, 970, 1420], [east, 'A20', 1118, 1384, 1146, 1400], [east, 'A208', 1114, 1450, 1140, 1490], [east, 'Footscray Rd', 1198, 1342, 1256, 1440], [east, 'Halfway St', 1284, 1326, 1338, 1400], [east, 'Hurst Rd', 1404, 1438, 1458, 1404], [east, 'Gree', 1194, 1470, 1198, 1510]]
};
for (const kind of ['road', 'water', 'area', 'small', 'town', 'district', 'isle', 'city']) {
  const s = styles[kind];
  for (const [sheet, text, x1, y1, x2, y2] of labels[kind]) {
    const a = sheet(x1, y1), b = sheet(x2, y2);
    const len = Math.hypot(b[0] - a[0], b[1] - a[1]), ang = Math.atan2(b[1] - a[1], b[0] - a[0]) * 57.2958;
    el('text', {
      transform: `translate(${a[0].toFixed(1)} ${a[1].toFixed(1)}) rotate(${ang.toFixed(1)})`, y: (s.size * .36).toFixed(1), 'font-size': s.size, fill: s.fill,
      textLength: len.toFixed(1), lengthAdjust: 'spacingAndGlyphs', 'font-style': s.italic ? 'italic' : 'normal', 'font-weight': kind === 'isle' ? 500 : 400,
      stroke: '#f2f2f2', 'stroke-width': 2, 'paint-order': 'stroke', 'stroke-linejoin': 'round'
    }, text);
  }
}

// marker
el('path', { d: 'M839 290 C837 278 828.500 271 828.500 262.500 A10.500 10.500 0 0 1 849.500 262.500 C849.500 271 841 278 839 290 Z', fill: '#ea4c40', stroke: '#b8352c', 'stroke-width': .8 });
el('circle', { cx: 839, cy: 262.500, r: 3.800, fill: '#5c140f' });
```
